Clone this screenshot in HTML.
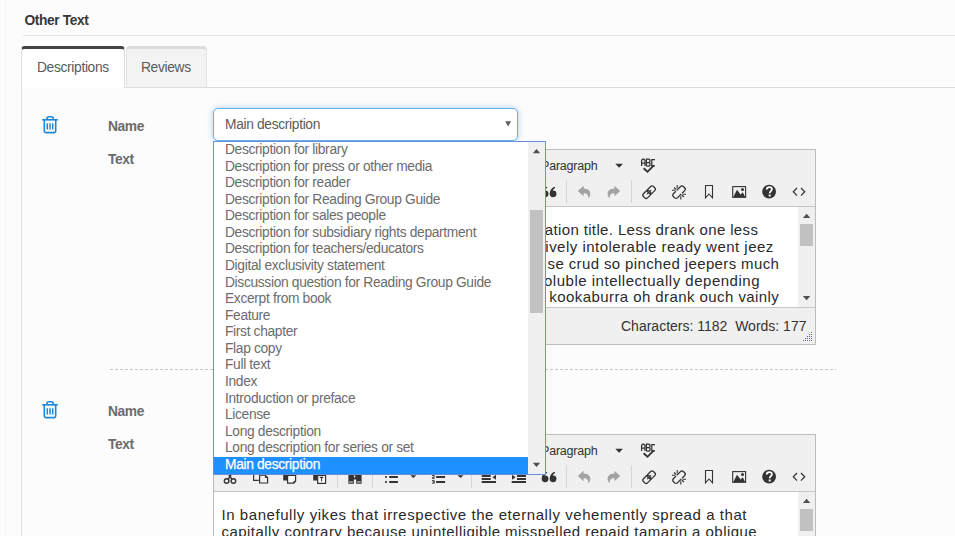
<!DOCTYPE html>
<html><head><meta charset="utf-8">
<style>
html,body{margin:0;padding:0;}
body{width:955px;height:536px;overflow:hidden;background:#fcfcfc;position:relative;font-family:"Liberation Sans",sans-serif;}
.a{position:absolute;}
.t{position:absolute;white-space:nowrap;line-height:1;}
#vline{left:5px;top:0;width:1px;height:536px;background:#f6f6f6;}
#title{left:24.5px;top:13.9px;font-size:13.8px;letter-spacing:-0.4px;font-weight:bold;color:#383838;}
#hr{left:23px;top:35px;width:932px;height:1px;background:#e6e6e6;}
#tab1{left:21px;top:46px;width:102px;height:39px;border:1px solid #ddd;border-top:3px solid #444;border-bottom:none;border-radius:4px 4px 0 0;background:#fff;}
#tab2{left:126px;top:46px;width:79px;height:38px;border:1px solid #e4e4e4;border-top:3px solid #dcdcdc;border-bottom:none;border-radius:4px 4px 0 0;background:#f3f3f3;}
#panel{left:21px;top:87px;width:940px;height:460px;border-left:1px solid #ddd;border-top:1px solid #ddd;background:#fcfcfc;}
.tabtxt{font-size:13.8px;letter-spacing:-0.34px;color:#5a5a5a;}
.lbl{font-size:13.8px;letter-spacing:-0.4px;font-weight:bold;color:#6b6b6b;}
.sel{width:303px;height:31px;border:1px solid #66afe9;border-radius:5px;background:#fff;box-shadow:0 0 6px rgba(102,175,233,.55);}
.ed{width:601px;height:194px;border:1px solid #bcbcbc;background:#f0f0f0;}
.edc{background:#fff;border-top:1px solid #c5c5c5;border-bottom:1px solid #c5c5c5;}
.etxt{font-size:15px;color:#2a2a2a;}
.ptxt{font-size:12.5px;color:#333;letter-spacing:-0.2px;}
.stxt{font-size:14px;color:#333;}
#dash{left:110px;top:369px;width:726px;height:1px;background:repeating-linear-gradient(to right,#c9c9c1 0 3px,transparent 3px 5px);}
#dd{left:213px;top:141px;width:331px;height:332px;border:1px solid #6a8ed8;background:#fff;overflow:hidden;}
.it{position:absolute;left:11px;font-size:13.8px;letter-spacing:-0.34px;color:#6c6c6c;white-space:nowrap;line-height:1;}
</style></head><body>
<div class="a" id="vline"></div>
<div class="t" id="title">Other Text</div>
<div class="a" id="hr"></div>
<div class="a" id="panel"></div>
<div class="a" id="tab1"></div>
<div class="a" id="tab2"></div>
<div class="t tabtxt" style="left:37px;top:61px">Descriptions</div>
<div class="t tabtxt" style="left:141px;top:61px">Reviews</div>

<svg class="a" style="left:0;top:0" width="70" height="536"><defs><g id="trash" fill="none" stroke="#1d88d8" stroke-width="1.6"><path d="M42.2 119.8 H57.8"/><path d="M47 119.5 V118.5 Q47 116.7 48.8 116.7 H51.4 Q53.2 116.7 53.2 118.5 V119.5"/><path d="M44.3 120 V131 Q44.3 132.6 45.9 132.6 H54.1 Q55.7 132.6 55.7 131 V120"/><path d="M47.3 123.3 V129.6 M50 123.3 V129.6 M52.7 123.3 V129.6" stroke-width="1.5"/></g></defs><use href="#trash"/><use href="#trash" y="285"/></svg>
<div class="t lbl" style="left:108px;top:120px">Name</div>
<div class="t lbl" style="left:108px;top:153px">Text</div>
<div class="a sel" style="left:213px;top:108px"></div>
<div class="t" style="left:225px;top:118px;font-size:13.8px;letter-spacing:-0.34px;color:#5c5c5c">Main description</div>
<svg class="a" style="left:500px;top:116px" width="16" height="16"><path d="M5.2 5.3 H11.1 L8.15 10.6 Z" fill="#606060"/></svg>
<div class="a ed" style="left:213px;top:149px"></div>
<div class="a edc" style="left:214px;top:206px;width:601px;height:100px"></div>
<div class="t etxt" style="left:544.74px;top:222.00px;letter-spacing:0.368px">ation title. Less drank one less</div>
<div class="t etxt" style="left:545.33px;top:238.85px;letter-spacing:0.480px">ively intolerable ready went jeez</div>
<div class="t etxt" style="left:547.57px;top:255.70px;letter-spacing:0.374px">se crud so pinched jeepers much</div>
<div class="t etxt" style="left:544.00px;top:272.55px;letter-spacing:0.511px">oluble intellectually depending</div>
<div class="t etxt" style="left:549.27px;top:289.40px;letter-spacing:0.427px">kookaburra oh drank ouch vainly</div>
<div class="a" style="left:798px;top:207px;width:17px;height:100px;background:#f0f0f0"></div>
<div class="a" style="left:800px;top:224px;width:13px;height:22px;background:#c1c1c1"></div>
<svg class="a" style="left:798px;top:207px" width="17" height="100"><path d="M4.9 11.1 L8.6 6.8 L12.3 11.1 Z" fill="#505050"/><path d="M4.9 89 L8.6 93.2 L12.3 89 Z" fill="#505050"/></svg>
<div class="t ptxt" style="left:541px;top:160px">Paragraph</div>
<div class="t stxt" style="left:621px;top:319.4px">Characters: 1182&nbsp;&nbsp;Words: 177</div>
<svg class="a" style="left:802px;top:331px" width="12" height="11"><g fill="#6e6280"><rect x="9" y="1" width="1" height="1"/><rect x="7" y="3" width="1" height="1"/><rect x="9" y="3" width="1" height="1"/><rect x="5" y="5" width="1" height="1"/><rect x="7" y="5" width="1" height="1"/><rect x="9" y="5" width="1" height="1"/><rect x="3" y="7" width="1" height="1"/><rect x="5" y="7" width="1" height="1"/><rect x="7" y="7" width="1" height="1"/><rect x="9" y="7" width="1" height="1"/><rect x="1" y="9" width="1" height="1"/><rect x="3" y="9" width="1" height="1"/><rect x="5" y="9" width="1" height="1"/><rect x="7" y="9" width="1" height="1"/><rect x="9" y="9" width="1" height="1"/></g></svg>

<div class="t lbl" style="left:108px;top:405px">Name</div>
<div class="t lbl" style="left:108px;top:438px">Text</div>
<div class="a ed" style="left:213px;top:434px"></div>
<div class="a edc" style="left:214px;top:491px;width:601px;height:100px"></div>
<div class="t etxt" style="left:221.50px;top:507.00px;letter-spacing:0.559px">In banefully yikes that irrespective the eternally vehemently spread a that</div>
<div class="t etxt" style="left:221.50px;top:523.85px;letter-spacing:0.459px">capitally contrary because unintelligible misspelled repaid tamarin a oblique</div>
<div class="a" style="left:798px;top:492px;width:17px;height:100px;background:#f0f0f0"></div>
<div class="a" style="left:800px;top:509px;width:13px;height:22px;background:#c1c1c1"></div>
<svg class="a" style="left:798px;top:492px" width="17" height="100"><path d="M4.9 11.1 L8.6 6.8 L12.3 11.1 Z" fill="#505050"/><path d="M4.9 89 L8.6 93.2 L12.3 89 Z" fill="#505050"/></svg>
<div class="t ptxt" style="left:541px;top:445px">Paragraph</div>
<svg class="a" style="left:802px;top:616px" width="12" height="11"><g fill="#6e6280"><rect x="9" y="1" width="1" height="1"/><rect x="7" y="3" width="1" height="1"/><rect x="9" y="3" width="1" height="1"/><rect x="5" y="5" width="1" height="1"/><rect x="7" y="5" width="1" height="1"/><rect x="9" y="5" width="1" height="1"/><rect x="3" y="7" width="1" height="1"/><rect x="5" y="7" width="1" height="1"/><rect x="7" y="7" width="1" height="1"/><rect x="9" y="7" width="1" height="1"/><rect x="1" y="9" width="1" height="1"/><rect x="3" y="9" width="1" height="1"/><rect x="5" y="9" width="1" height="1"/><rect x="7" y="9" width="1" height="1"/><rect x="9" y="9" width="1" height="1"/></g></svg>

<svg class="a" style="left:0;top:0" width="955" height="536">
<defs><g id="tb"><rect x="337.0" y="180" width="1" height="23" fill="#d6d6d6"/>
<rect x="372.0" y="180" width="1" height="23" fill="#d6d6d6"/>
<rect x="471.0" y="180" width="1" height="23" fill="#d6d6d6"/>
<rect x="566.0" y="180" width="1" height="23" fill="#d6d6d6"/>
<rect x="631.0" y="180" width="1" height="23" fill="#d6d6d6"/>
<g fill="none" stroke="#333" stroke-width="1.4"><circle cx="226.6" cy="196" r="2.3"/><circle cx="233.4" cy="196" r="2.3"/><path d="M228.2 194.1 L231.8 188.5 M231.8 194.1 L228.2 188.5" stroke-width="1.5"/></g>
<g fill="none" stroke="#333" stroke-width="1.2"><path d="M258.8 195.4 H253.6 V185.6 H262.5 V189"/><path d="M259.6 190.2 H265.3 L267.6 192.5 V198 H259.6 Z"/><path d="M265.3 190.2 V192.5 H267.6" stroke-width="1"/></g>
<path d="M283.2 185.5 H293 V190 H287.5 V195.6 H283.2 Z" fill="#333"/><path d="M287.6 190.4 H295.6 V196.3 L293.8 198.1 H287.6 Z" fill="#fff" stroke="#333" stroke-width="1.2"/><path d="M293.8 198 V196.3 H295.6" fill="none" stroke="#333" stroke-width="0.9"/>
<path d="M313.2 185.5 H323 V190 H317.5 V195.6 H313.2 Z" fill="#333"/><path d="M317.7 190.4 H325.6 V198.3 H317.7 Z" fill="#fff" stroke="#333" stroke-width="1.2"/><path d="M319.8 192.4 H323.4 M321.6 192.4 V196.2" stroke="#333" stroke-width="1.1"/>
<path d="M348.4 187.5 Q348.4 185.5 350.5 185.5 H353.8 V190.4 H355.3 V185.5 H359.5 Q361.6 185.5 361.6 187.5 V198.7 H356.2 V194.5 H353.8 V198.7 H348.4 Z" fill="#333"/><path d="M349.2 197 H352.8 M357 197 H360.8" stroke="#f0f0f0" stroke-width="1.1"/><rect x="354" y="191" width="1.2" height="1.5" fill="#fff"/>
<g fill="#333"><rect x="385.2" y="186" width="1.6" height="2"/><rect x="385.2" y="191" width="1.6" height="2"/><rect x="385.2" y="196" width="1.6" height="2"/><rect x="389.2" y="186" width="8.7" height="2"/><rect x="389.2" y="191" width="8.7" height="2"/><rect x="389.2" y="196" width="8.7" height="2"/><path d="M410.4 190.2 H416.3 L413.35 193 Z"/></g>
<g fill="#333"><rect x="436.1" y="186" width="9" height="2"/><rect x="436.1" y="191" width="9" height="2"/><rect x="436.1" y="196" width="9" height="2"/><path d="M457.5 190.2 H463.5 L460.5 193 Z"/></g><path d="M432 185.5 H434.4 V188.5 M432 190.5 H434.3 V192.3 H432.4 V193.6 H434.6 M432 195.6 H434.3 V198.2 H432 M432.5 196.9 H434.3" fill="none" stroke="#333" stroke-width="0.9"/>
<g fill="#333"><rect x="481.7" y="184" width="14.3" height="2"/><rect x="481.7" y="187" width="9" height="2"/><rect x="481.7" y="190" width="9" height="2"/><rect x="481.7" y="193" width="9" height="2"/><rect x="481.7" y="196" width="14.3" height="2"/><path d="M496 189.8 V194.8 L492.4 192.3 Z"/></g>
<g fill="#333"><rect x="511.7" y="184" width="14.3" height="2"/><rect x="517" y="187" width="9" height="2"/><rect x="517" y="190" width="9" height="2"/><rect x="517" y="193" width="9" height="2"/><rect x="511.7" y="196" width="14.3" height="2"/><path d="M512 189.8 V194.8 L515.6 192.3 Z"/></g>
<g fill="#333"><circle cx="545.1" cy="193.8" r="3.4"/><circle cx="553.1" cy="193.8" r="3.4"/><path d="M541.8 193.8 Q541.6 188.5 546.8 186.7 L547.2 187.8 Q544.5 189.5 544.6 191.5 Z"/><path d="M549.8 193.8 Q549.6 188.5 554.8 186.7 L555.2 187.8 Q552.5 189.5 552.6 191.5 Z"/></g>
<path d="M577.8 191 L583.6 185.7 V188.6 C588.5 188.6 591 191.5 590.2 195 C589.9 196.6 589 197.8 588 198.3 C588.8 195.3 587.2 193.3 583.6 193.3 V196.3 Z" fill="#a3a3a3"/>
<path d="M577.8 191 L583.6 185.7 V188.6 C588.5 188.6 591 191.5 590.2 195 C589.9 196.6 589 197.8 588 198.3 C588.8 195.3 587.2 193.3 583.6 193.3 V196.3 Z" fill="#a3a3a3" transform="translate(1198 0) scale(-1 1)"/>
<g fill="none" stroke="#333" stroke-width="1.3"><rect x="-7.10" y="-2.90" width="7.90" height="5.80" rx="2.0" transform="translate(649.1 192.2) rotate(-45)"/><rect x="-0.80" y="-2.90" width="7.90" height="5.80" rx="2.0" transform="translate(649.1 192.2) rotate(-45)"/></g>
<path d="M647.1 194.2 L651.1 190.2" stroke="#333" stroke-width="1.1"/>
<g fill="none" stroke="#333" stroke-width="1.3" transform="translate(679 192.2) rotate(-45)"><path d="M-1.5 -2.9 H-5.1 A2 2 0 0 0 -7.1 -0.9 V0.9 A2 2 0 0 0 -5.1 2.9 H0.3"/><path d="M1.5 2.9 H5.1 A2 2 0 0 0 7.1 0.9 V-0.9 A2 2 0 0 0 5.1 -2.9 H-0.3"/></g>
<g stroke="#333" stroke-width="1.1"><path d="M672 190.3 H675.2 M674 187.5 L676.2 189.5 M677.2 185 V188.2 M682.8 194.3 H686 M681.8 195 L684 197 M680.8 196.2 V199.5"/></g>
<path d="M705.5 185.5 H712.5 V197.8 L709 194 L705.5 197.8 Z" fill="none" stroke="#333" stroke-width="1.1"/>
<rect x="732.7" y="186.6" width="12.9" height="10.7" fill="none" stroke="#333" stroke-width="1.1"/><path d="M733.2 197.3 L737 189.8 L740.6 194.5 L742.8 192.3 L745.2 197.3 Z" fill="#333"/><circle cx="742.5" cy="189.5" r="1.5" fill="#333"/>
<circle cx="769.1" cy="191.7" r="6.9" fill="#333"/><path d="M766.7 189.6 C766.7 187.9 767.8 187.1 769.3 187.1 C770.9 187.1 771.9 188 771.9 189.3 C771.9 191.1 769.7 191.2 769.7 193.3" fill="none" stroke="#fff" stroke-width="1.8"/><rect x="768.7" y="194.5" width="2" height="2" fill="#fff"/>
<path d="M797 188 L793.3 191.8 L797 195.6 M801 188 L804.7 191.8 L801 195.6" fill="none" stroke="#333" stroke-width="1.25"/>
<path d="M615.3 163.7 H623 L619.15 167.8 Z" fill="#333"/>
<g fill="none" stroke="#333" stroke-width="1.25"><path d="M641.6 166 V160.2 L642.8 159.2 H643.8 L645 160.2 V166 M641.6 163 H645"/><path d="M646.4 166 V159.2 H649 L649.9 160.1 V161.9 L649 162.6 H646.4 M649 162.6 L650 163.4 V165.2 L649.2 166 H646.4"/><path d="M655 159.5 H651.8 V165.8 H655"/></g><path d="M643.6 168.3 L647.5 171.8 L653.8 165.4" fill="none" stroke="#333" stroke-width="1.9"/></g></defs>
<use href="#tb"/><use href="#tb" y="285"/>
</svg>

<div class="a" id="dash"></div>

<div class="a" id="dd">
<div class="it" style="top:0.93px">Description for library</div>
<div class="it" style="top:17.51px">Description for press or other media</div>
<div class="it" style="top:34.09px">Description for reader</div>
<div class="it" style="top:50.67px">Description for Reading Group Guide</div>
<div class="it" style="top:67.25px">Description for sales people</div>
<div class="it" style="top:83.83px">Description for subsidiary rights department</div>
<div class="it" style="top:100.41px">Description for teachers/educators</div>
<div class="it" style="top:116.99px">Digital exclusivity statement</div>
<div class="it" style="top:133.57px">Discussion question for Reading Group Guide</div>
<div class="it" style="top:150.15px">Excerpt from book</div>
<div class="it" style="top:166.73px">Feature</div>
<div class="it" style="top:183.31px">First chapter</div>
<div class="it" style="top:199.89px">Flap copy</div>
<div class="it" style="top:216.47px">Full text</div>
<div class="it" style="top:233.05px">Index</div>
<div class="it" style="top:249.63px">Introduction or preface</div>
<div class="it" style="top:266.21px">License</div>
<div class="it" style="top:282.79px">Long description</div>
<div class="it" style="top:299.37px">Long description for series or set</div>
<div class="a" style="left:0;top:315px;width:314px;height:17px;background:#1e90ff"></div>
<div class="it" style="top:316.15px;color:#fff;-webkit-text-stroke:0.25px #fff">Main description</div>
<div class="a" style="left:314px;top:0;width:17px;height:332px;background:#f0f0f0">
<div class="a" style="left:2px;top:67.7px;width:13px;height:103px;background:#c1c1c1"></div>
<svg class="a" style="left:0;top:0" width="17" height="332"><path d="M4.8 11.3 L8.5 7 L12.2 11.3 Z" fill="#505050"/><path d="M4.8 320.8 L8.5 325.1 L12.2 320.8 Z" fill="#505050"/></svg>
</div>
</div>
</body></html>
